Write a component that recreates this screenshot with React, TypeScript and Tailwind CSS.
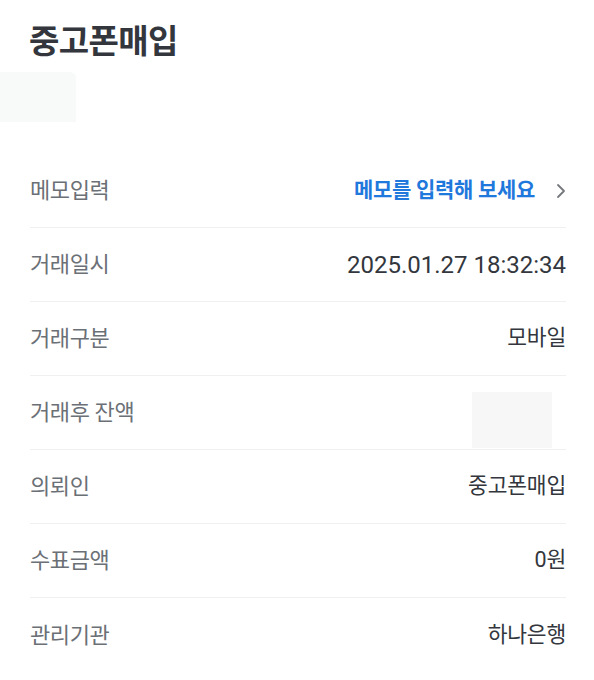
import React from "react";

const rows: { label: string; value?: string; kind?: "memo" | "hidden" | "date" }[] = [
  { label: "메모입력", kind: "memo" },
  { label: "거래일시", value: "2025.01.27 18:32:34", kind: "date" },
  { label: "거래구분", value: "모바일" },
  { label: "거래후 잔액", kind: "hidden" },
  { label: "의뢰인", value: "중고폰매입" },
  { label: "수표금액", value: "0원" },
  { label: "관리기관", value: "하나은행" },
];

export default function App() {
  return (
    <div
      className="w-[594px] h-[680px] bg-white overflow-hidden relative"
      style={{ fontFamily: 'Roboto, "Noto Sans CJK KR", "Noto Sans", sans-serif' }}
    >
      <div className="absolute left-0 top-[72px] w-[76px] h-[50px] bg-[#f8f9f9] rounded-tr-[6px]" />
      <div className="pl-[29px] pt-[20px] h-[154px]">
        <h1 className="text-[33px] font-bold leading-[44px] text-[#33373d] tracking-[-0.6px]">중고폰매입</h1>
      </div>
      <div className="pr-[28px] pl-[30px]">
        {rows.map((r, i) => (
          <div
            key={r.label}
            className={`flex items-center justify-between h-[74px] ${i < rows.length - 1 ? "border-b border-[#eef0f1]" : ""}`}
          >
            <span className="text-[22px] text-[#6b7076] tracking-[-0.4px]">{r.label}</span>
            {r.kind === "memo" ? (
              <span className="flex items-center gap-[21px]">
                <span className="text-[21px] font-semibold text-[#1f78dc] tracking-[-0.3px]">메모를 입력해 보세요</span>
                <svg width="10" height="16" viewBox="0 0 10 16" fill="none">
                  <path d="M2 2 L8 8 L2 14" stroke="#75787c" strokeWidth="1.8" strokeLinecap="round" strokeLinejoin="round" />
                </svg>
              </span>
            ) : r.kind === "hidden" ? (
              <span className="block w-[80px] h-[56px] bg-[#f7f7f7] mr-[14px] mt-[14px]" />
            ) : r.kind === "date" ? (
              <span className="text-[24px] text-[#33373d]">{r.value}</span>
            ) : (
              <span className="text-[21.5px] text-[#33373d] tracking-[-0.2px]">{r.value}</span>
            )}
          </div>
        ))}
      </div>
    </div>
  );
}
